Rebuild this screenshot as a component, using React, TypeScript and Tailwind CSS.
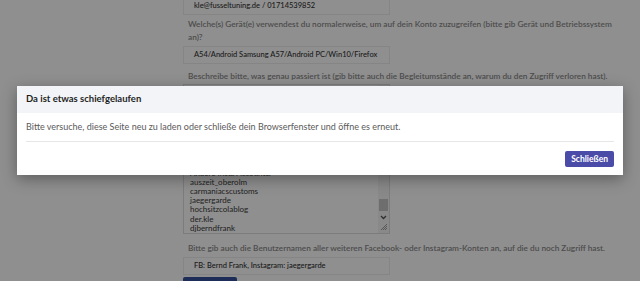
import React from "react";

const font = { fontFamily: "Lato, 'Open Sans', sans-serif" };

const otherAccounts = [
  "kle.performance",
  "frank_bernd",
  "kle.cars",
  "kle.racing",
  "Andere Insta Accounts:",
  "auszeit_oberolm",
  "carmaniacscustoms",
  "jaegergarde",
  "hochsitzcolablog",
  "der.kle",
  "djberndfrank",
];

const Field = ({ value, className }: { value: string; className?: string }) => (
  <div
    className={
      "flex h-[18px] w-[207px] items-center whitespace-nowrap border border-[#eeeeee] bg-white pl-[10px] text-[7.5px] font-medium text-[#333333] " +
      (className ?? "")
    }
  >
    {value}
  </div>
);

const Label = ({ children, className }: { children: React.ReactNode; className?: string }) => (
  <p className={"text-[8.25px] font-semibold leading-[13px] text-[#8a8a8a] " + (className ?? "")}>{children}</p>
);

export default function App() {
  return (
    <div className="relative h-[281px] w-[640px] overflow-hidden bg-white" style={font}>
      {/* form behind the dialog */}
      <div className="ml-[183px] -mt-[3px] flex w-[440px] flex-col">
        <Field value="kle@fusseltuning.de / 01714539852" />
        <Label className="mt-[3px] pl-[5px]">
          Welche(s) Gerät(e) verwendest du normalerweise, um auf dein Konto zuzugreifen (bitte gib Gerät und
          Betriebssystem an)?
        </Label>
        <Field value="A54/Android Samsung A57/Android PC/Win10/Firefox" className="mt-[2px]" />
        <Label className="mt-[6px] pl-[5px]">
          Beschreibe bitte, was genau passiert ist (gib bitte auch die Begleitumstände an, warum du den Zugriff
          verloren hast).
        </Label>
        <div className="relative mt-[1px] flex h-[150px] w-[207px] flex-col justify-end overflow-hidden border border-[#dddddd] bg-white pl-[6px] text-[8px] leading-[9.2px] text-[#3a3a3a]">
          {otherAccounts.map((a) => (
            <div key={a}>{a}</div>
          ))}
          <div className="absolute right-0 top-0 flex h-full w-[11px] flex-col items-center bg-[#f4f4f4]">
            <div className="mt-[114px] h-[12px] w-[9px] bg-[#c4c4c4]" />
            <svg className="mt-[4px]" width="7" height="5" viewBox="0 0 7 5">
              <path d="M1 1l2.5 2.5L6 1" stroke="#555" strokeWidth="1.3" fill="none" />
            </svg>
            <svg className="mt-[3px]" width="8" height="8" viewBox="0 0 8 8">
              <path d="M7 1L1 7M7 3L3 7M7 5L5 7" stroke="#888" strokeWidth="0.8" />
            </svg>
          </div>
        </div>
        <Label className="mt-[8px] pl-[5px]">
          Bitte gib auch die Benutzernamen aller weiteren Facebook- oder Instagram-Konten an, auf die du noch
          Zugriff hast.
        </Label>
        <Field value="FB: Bernd Frank, Instagram: jaegergarde" className="mt-[2px]" />
        <div className="mt-[2px] h-[24px] w-[54px] rounded-[2px] bg-[#34509e]" />
      </div>

      {/* dimming overlay */}
      <div className="absolute inset-0 bg-black/[0.44]" />

      {/* dialog */}
      <div className="absolute left-[17px] top-[86px] w-[606px] bg-white shadow-[0_4px_14px_rgba(0,0,0,0.35)]">
        <div className="flex h-[27px] items-center bg-[#f2f4f7] px-[9px] text-[9.5px] font-bold text-[#1f1f1f]">
          Da ist etwas schiefgelaufen
        </div>
        <div className="px-[9px] pt-[9px] pb-[8px]">
          <p className="text-[9px] leading-[10px] text-[#5a5a5a]">
            Bitte versuche, diese Seite neu zu laden oder schließe dein Browserfenster und öffne es erneut.
          </p>
          <div className="mt-[9px] border-t border-[#e6e6e6]" />
          <div className="mt-[9px] flex justify-end">
            <button className="flex h-[16px] items-center rounded-[2px] bg-[#4b4ba8] px-[6px] text-[8.5px] font-bold text-white">
              Schließen
            </button>
          </div>
        </div>
      </div>
    </div>
  );
}
